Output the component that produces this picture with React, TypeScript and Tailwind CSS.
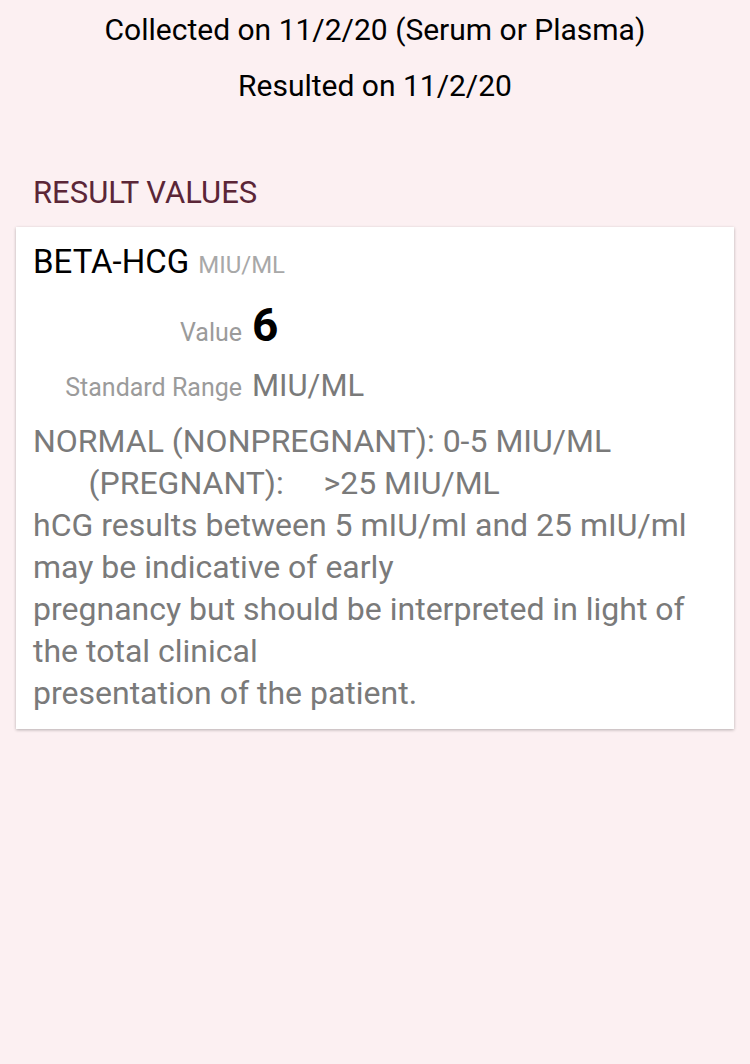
const NOTE = `NORMAL (NONPREGNANT): 0-5 MIU/ML
       (PREGNANT):     >25 MIU/ML
hCG results between 5 mIU/ml and 25 mIU/ml
may be indicative of early
pregnancy but should be interpreted in light of
the total clinical
presentation of the patient.`;

export default function App() {
  return (
    <div className="min-h-[1064px] bg-[#fcf0f2] font-['Roboto','Liberation_Sans',sans-serif]">
      {/* Header */}
      <div className="pt-[12px] text-center text-[30px] leading-[36px] text-black">
        <div>Collected on 11/2/20 (Serum or Plasma)</div>
        <div className="mt-[20px]">Resulted on 11/2/20</div>
      </div>

      <h2 className="mt-[71px] px-[33px] text-[31px] leading-[36px] text-[#5b2637]">RESULT VALUES</h2>

      {/* Result card */}
      <div className="mx-[16px] mt-[16px] bg-white px-[17px] pt-[16px] pb-[15px] shadow-[0_1px_3px_rgba(0,0,0,0.28)]">
        <div className="flex items-baseline gap-[9px]">
          <span className="text-[33px] leading-[38px] text-black">BETA-HCG</span>
          <span className="text-[24px] leading-[38px] text-[#a8a8a8]">MIU/ML</span>
        </div>

        <div className="mt-[16px] flex items-baseline gap-[10px]">
          <span className="w-[209px] text-right text-[25px] leading-[50px] text-[#9b9b9b]">Value</span>
          <span className="text-[46px] font-bold leading-[50px] text-black">6</span>
        </div>

        <div className="mt-[8px] flex items-baseline gap-[10px]">
          <span className="w-[209px] text-right text-[25px] leading-[40px] text-[#9b9b9b]">Standard Range</span>
          <span className="text-[31px] leading-[40px] text-[#7a7a7a]">MIU/ML</span>
        </div>

        <p className="mt-[12px] whitespace-pre-wrap text-[32px] leading-[42px] text-[#7a7a7a]">{NOTE}</p>
      </div>
    </div>
  );
}
